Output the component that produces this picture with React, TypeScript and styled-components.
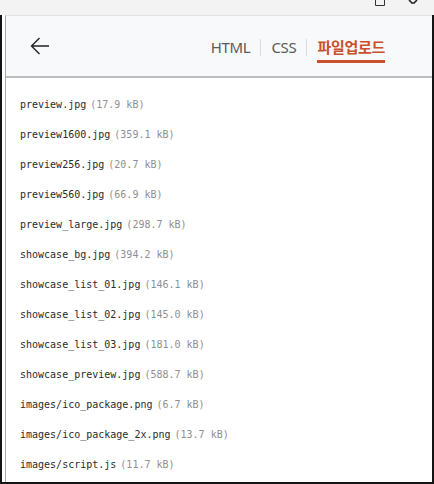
import React from 'react';
import styled, { createGlobalStyle } from 'styled-components';

type FileEntry = {
    name: string;
    size: string;
};

const files: FileEntry[] = [
    { name: 'preview.jpg', size: '17.9 kB' },
    { name: 'preview1600.jpg', size: '359.1 kB' },
    { name: 'preview256.jpg', size: '20.7 kB' },
    { name: 'preview560.jpg', size: '66.9 kB' },
    { name: 'preview_large.jpg', size: '298.7 kB' },
    { name: 'showcase_bg.jpg', size: '394.2 kB' },
    { name: 'showcase_list_01.jpg', size: '146.1 kB' },
    { name: 'showcase_list_02.jpg', size: '145.0 kB' },
    { name: 'showcase_list_03.jpg', size: '181.0 kB' },
    { name: 'showcase_preview.jpg', size: '588.7 kB' },
    { name: 'images/ico_package.png', size: '6.7 kB' },
    { name: 'images/ico_package_2x.png', size: '13.7 kB' },
    { name: 'images/script.js', size: '11.7 kB' },
];

const GlobalStyle = createGlobalStyle`
    html, body {
        margin: 0;
        padding: 0;
        background: #ffffff;
    }
    * {
        box-sizing: border-box;
    }
`;

const Window = styled.div`
    width: 434px;
    height: 484px;
    display: flex;
    flex-direction: column;
    overflow: hidden;
`;

const TitleBar = styled.div`
    height: 15px;
    flex-shrink: 0;
    background: #f3f3f3;
    display: flex;
    justify-content: flex-end;
    align-items: flex-start;
    gap: 22px;
    padding-right: 16px;
`;

const Frame = styled.div`
    flex: 1;
    display: flex;
    min-height: 0;
    border-left: 2px solid #141414;
    border-right: 2px solid #141414;
    border-bottom: 2px solid #141414;
    padding-left: 3px;
    background: #ffffff;
`;

const Panel = styled.div`
    flex: 1;
    display: flex;
    flex-direction: column;
    border-left: 1px solid #a8a8a8;
    border-top: 1px solid #e2e2e2;
    min-width: 0;
`;

const Header = styled.header`
    height: 62px;
    flex-shrink: 0;
    background: #f8f9fa;
    border-bottom: 2px solid #bdbdbd;
    display: flex;
    align-items: center;
    justify-content: space-between;
    padding: 0 47px 0 22px;
`;

const BackButton = styled.button`
    border: none;
    background: transparent;
    padding: 0;
    width: 24px;
    height: 24px;
    display: flex;
    align-items: center;
    justify-content: center;
    color: #222;
    cursor: pointer;
`;

const Tabs = styled.nav`
    display: flex;
    align-items: center;
    font-family: 'Noto Sans', 'Noto Sans CJK KR', sans-serif;
    font-size: 15px;
    letter-spacing: -0.3px;
    margin-top: 2px;
`;

const Tab = styled.span<{ $active?: boolean }>`
    position: relative;
    color: ${({ $active }) => ($active ? '#c8502d' : '#5a5a5a')};
    font-weight: ${({ $active }) => ($active ? 600 : 400)};
    line-height: 22px;

    &::after {
        content: '';
        display: ${({ $active }) => ($active ? 'block' : 'none')};
        position: absolute;
        left: 0;
        right: 0;
        bottom: -5px;
        height: 3px;
        background: #c8502d;
    }
`;

const Divider = styled.span`
    width: 1px;
    height: 17px;
    background: #dcdcdc;
    margin: 0 10px;
`;

const FileList = styled.ul`
    list-style: none;
    margin: 0;
    padding: 11px 0 0 14px;
    font-family: 'DejaVu Sans Mono', 'Liberation Mono', monospace;
    font-size: 10px;
`;

const FileRow = styled.li`
    height: 30px;
    display: flex;
    align-items: center;
    white-space: nowrap;
`;

const FileName = styled.span`
    color: #2b2b2b;
`;

const FileSize = styled.span`
    color: #8f8f8f;
    margin-left: 4px;
`;

function WindowControls() {
    return (
        <>
            <svg width="12" height="6" viewBox="0 0 12 6">
                <path d="M1.5 0 V5.5 H10.5 V0" fill="none" stroke="#333" strokeWidth="1" />
            </svg>
            <svg width="10" height="5" viewBox="0 0 10 5">
                <path d="M1 0 L4 3 M9 0 L6 3 M3 3 H7" fill="none" stroke="#222" strokeWidth="1.6" />
            </svg>
        </>
    );
}

export default function App() {
    return (
        <Window>
            <GlobalStyle />
            <TitleBar>
                <WindowControls />
            </TitleBar>
            <Frame>
                <Panel>
                    <Header>
                        <BackButton aria-label="back">
                            <svg width="22" height="20" viewBox="0 0 22 20">
                                <path
                                    d="M20 10 H2.5 M10.5 2 L2.5 10 L10.5 18"
                                    fill="none"
                                    stroke="#222"
                                    strokeWidth="1.4"
                                />
                            </svg>
                        </BackButton>
                        <Tabs>
                            <Tab>HTML</Tab>
                            <Divider />
                            <Tab>CSS</Tab>
                            <Divider />
                            <Tab $active>파일업로드</Tab>
                        </Tabs>
                    </Header>
                    <FileList>
                        {files.map((file) => (
                            <FileRow key={file.name}>
                                <FileName>{file.name}</FileName>
                                <FileSize>({file.size})</FileSize>
                            </FileRow>
                        ))}
                    </FileList>
                </Panel>
            </Frame>
        </Window>
    );
}
